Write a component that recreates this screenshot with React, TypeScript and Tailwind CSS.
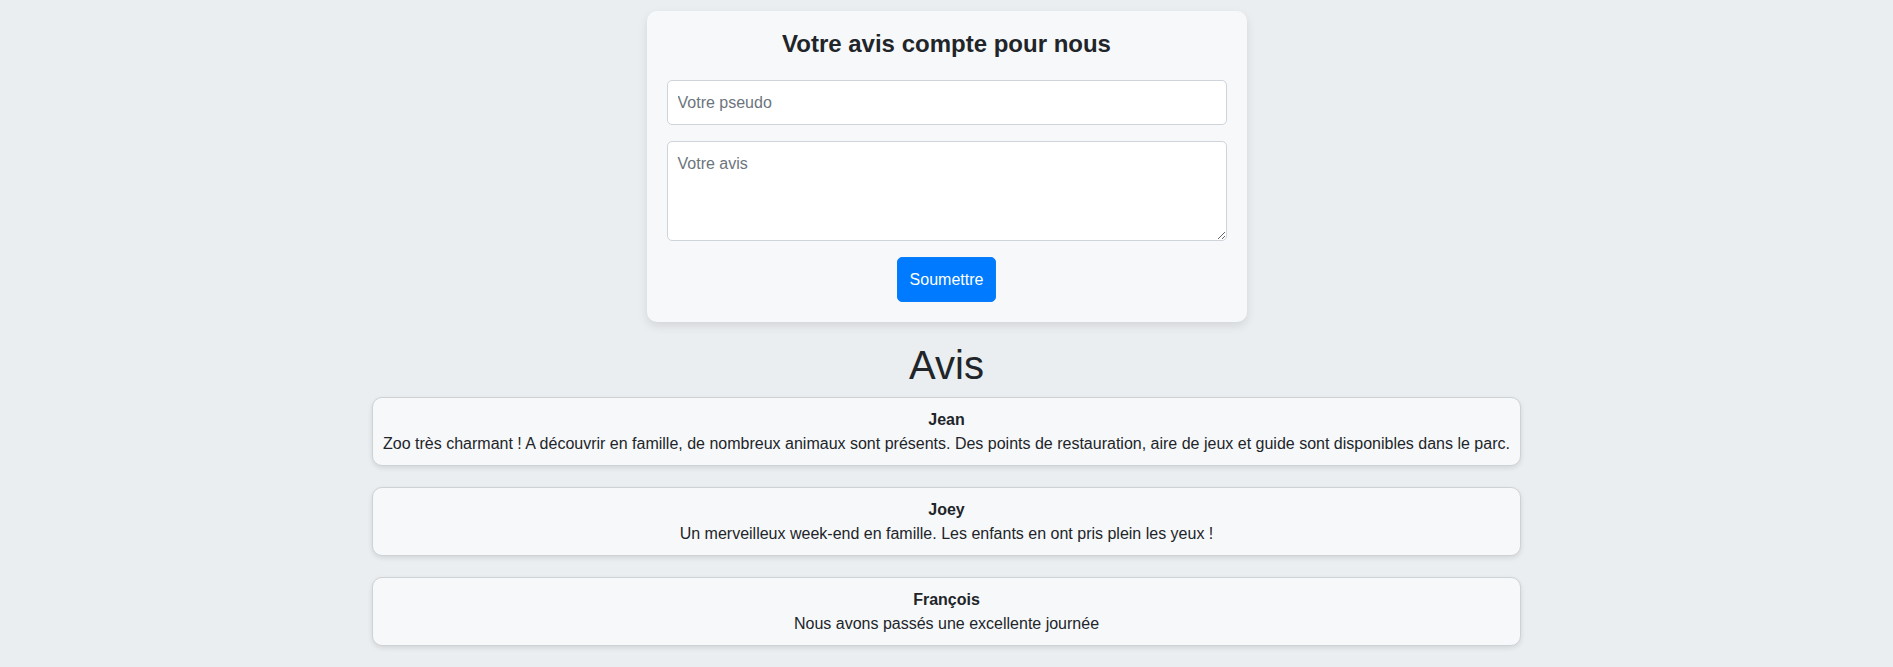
import { useState } from "react";

type Review = {
  pseudo: string;
  text: string;
};

const reviews: Review[] = [
  {
    pseudo: "Jean",
    text: "Zoo très charmant ! A découvrir en famille, de nombreux animaux sont présents. Des points de restauration, aire de jeux et guide sont disponibles dans le parc.",
  },
  {
    pseudo: "Joey",
    text: "Un merveilleux week-end en famille. Les enfants en ont pris plein les yeux !",
  },
  {
    pseudo: "François",
    text: "Nous avons passés une excellente journée",
  },
];

export default function App() {
  const [pseudo, setPseudo] = useState("");
  const [avis, setAvis] = useState("");

  return (
    <div className="min-h-screen bg-[#ebeef0] pt-[11px] pb-6 font-['Liberation_Sans',Arial,sans-serif] text-[#212529]">
      <form
        onSubmit={(e) => e.preventDefault()}
        className="mx-auto flex w-[600px] flex-col rounded-[10px] bg-[#f7f8fa] px-5 pt-[18px] pb-5 shadow-[0_4px_10px_rgba(0,0,0,0.1)]"
      >
        <h2 className="mb-[22px] text-center text-[24px] leading-[29px] font-bold">
          Votre avis compte pour nous
        </h2>

        <input
          type="text"
          value={pseudo}
          onChange={(e) => setPseudo(e.target.value)}
          placeholder="Votre pseudo"
          className="h-[45px] w-full rounded-[5px] border border-[#ced4da] bg-white px-[10px] text-[16px] placeholder:text-[#6c757d] focus:outline-none"
        />

        <textarea
          value={avis}
          onChange={(e) => setAvis(e.target.value)}
          placeholder="Votre avis"
          className="mt-[16px] h-[100px] w-full rounded-[5px] border border-[#ced4da] bg-white p-[10px] text-[16px] placeholder:text-[#6c757d] focus:outline-none"
        />

        <button
          type="submit"
          className="mx-auto mt-[16px] h-[45px] rounded-[5px] border border-[#0a7df9] bg-[#007bff] px-[12px] text-[16px] text-white"
        >
          Soumettre
        </button>
      </form>

      <h1 className="mt-[19px] mb-[8px] text-center text-[40px] leading-[48px] font-normal">
        Avis
      </h1>

      <div className="mx-auto flex w-fit flex-col gap-[21px]">
        {reviews.map((review) => (
          <div
            key={review.pseudo}
            className="rounded-[10px] border border-[#cfd2d4] bg-[#f7f8fa] px-[10px] pt-[10px] pb-[9px] text-center text-[16px] leading-[24px] shadow-[0_2px_5px_rgba(0,0,0,0.1)]"
          >
            <p className="font-bold">{review.pseudo}</p>
            <p>{review.text}</p>
          </div>
        ))}
      </div>
    </div>
  );
}
